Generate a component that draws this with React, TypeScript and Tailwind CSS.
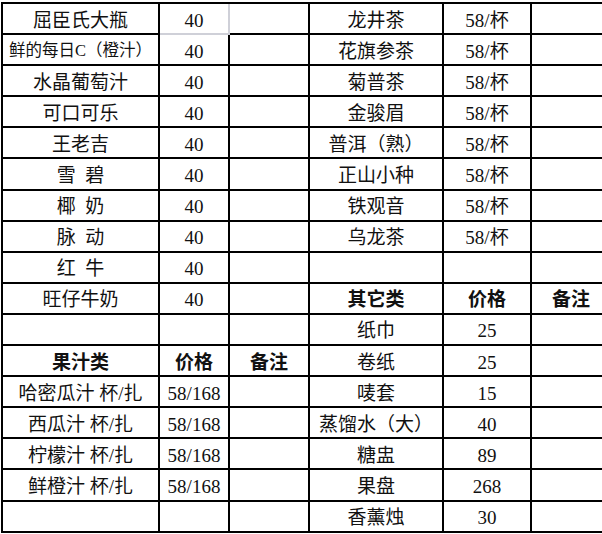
import React from 'react';

type Cell = { text?: string; bold?: boolean; small?: boolean };

const left: Cell[][] = [
  [{ text: '屈臣氏大瓶' }, { text: '40' }, {}],
  [{ text: '鲜的每日C（橙汁）', small: true }, { text: '40' }, {}],
  [{ text: '水晶葡萄汁' }, { text: '40' }, {}],
  [{ text: '可口可乐' }, { text: '40' }, {}],
  [{ text: '王老吉' }, { text: '40' }, {}],
  [{ text: '雪  碧' }, { text: '40' }, {}],
  [{ text: '椰  奶' }, { text: '40' }, {}],
  [{ text: '脉  动' }, { text: '40' }, {}],
  [{ text: '红  牛' }, { text: '40' }, {}],
  [{ text: '旺仔牛奶' }, { text: '40' }, {}],
  [{}, {}, {}],
  [{ text: '果汁类', bold: true }, { text: '价格', bold: true }, { text: '备注', bold: true }],
  [{ text: '哈密瓜汁 杯/扎' }, { text: '58/168' }, {}],
  [{ text: '西瓜汁 杯/扎' }, { text: '58/168' }, {}],
  [{ text: '柠檬汁 杯/扎' }, { text: '58/168' }, {}],
  [{ text: '鲜橙汁 杯/扎' }, { text: '58/168' }, {}],
  [{}, {}, {}],
];

const right: Cell[][] = [
  [{ text: '龙井茶' }, { text: '58/杯' }, {}],
  [{ text: '花旗参茶' }, { text: '58/杯' }, {}],
  [{ text: '菊普茶' }, { text: '58/杯' }, {}],
  [{ text: '金骏眉' }, { text: '58/杯' }, {}],
  [{ text: '普洱（熟）' }, { text: '58/杯' }, {}],
  [{ text: '正山小种' }, { text: '58/杯' }, {}],
  [{ text: '铁观音' }, { text: '58/杯' }, {}],
  [{ text: '乌龙茶' }, { text: '58/杯' }, {}],
  [{}, {}, {}],
  [{ text: '其它类', bold: true }, { text: '价格', bold: true }, { text: '备注', bold: true }],
  [{ text: '纸巾' }, { text: '25' }, {}],
  [{ text: '卷纸' }, { text: '25' }, {}],
  [{ text: '唛套' }, { text: '15' }, {}],
  [{ text: '蒸馏水（大）' }, { text: '40' }, {}],
  [{ text: '糖盅' }, { text: '89' }, {}],
  [{ text: '果盘' }, { text: '268' }, {}],
  [{ text: '香薰烛' }, { text: '30' }, {}],
];

export default function App() {
  return (
    <div
      className="w-[602px] h-[534px] overflow-hidden bg-white text-[#111] text-[19px] leading-none"
      style={{ fontFamily: '"Liberation Serif", "Noto Sans CJK SC", serif' }}
    >
      <div className="ml-[1px] mt-[2px] grid w-max grid-cols-[157px_70px_80px_134px_88px_80px] grid-rows-[repeat(17,31.1px)] border-l-2 border-t-2 border-black">
        {left.map((row, r) =>
          [...row, ...right[r]].map((cell, c) => {
            // the selected-looking cell at top of the price column
            const selected = r === 0 && c === 1;
            return (
              <div
                key={`${r}-${c}`}
                className={`flex items-center justify-center whitespace-pre border-r-2 border-b-2 pt-[3px] ${
                  selected ? 'border-[#cfd0d8]' : 'border-black'
                } ${cell.bold ? 'font-bold' : ''} ${cell.small ? 'text-[16.5px]' : ''}`}
              >
                {cell.text}
              </div>
            );
          })
        )}
      </div>
    </div>
  );
}
